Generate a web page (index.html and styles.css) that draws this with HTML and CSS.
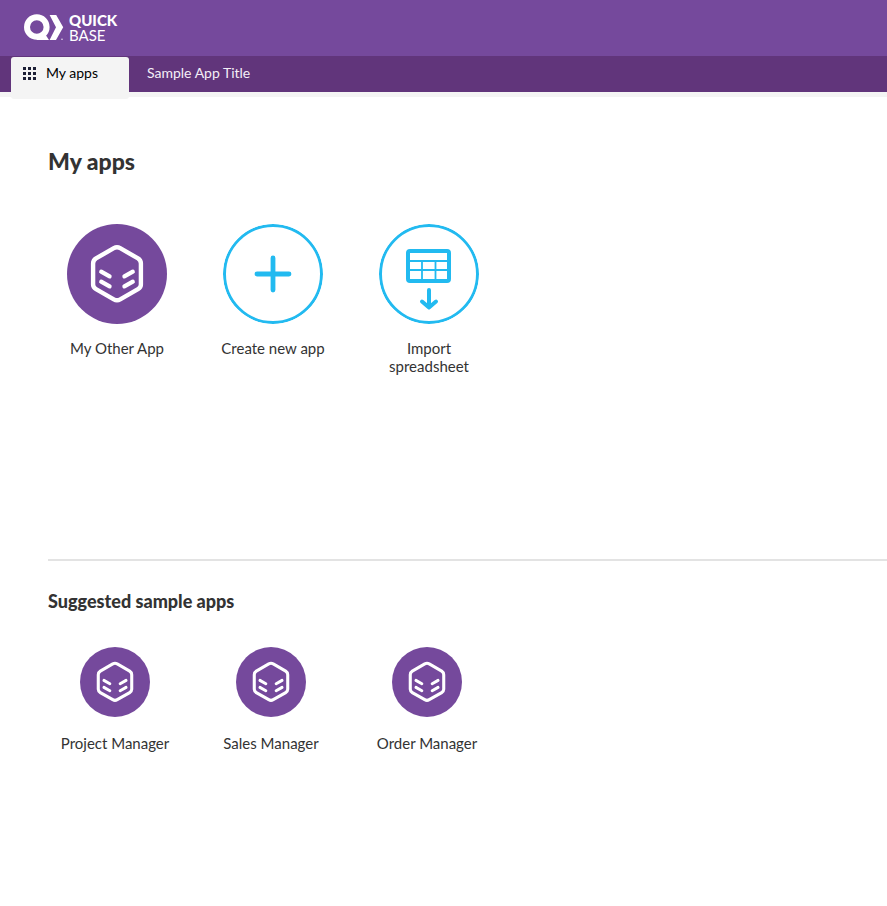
FILE: index.html
```html
<!DOCTYPE html>
<html lang="en">
<head>
<meta charset="utf-8">
<meta name="viewport" content="width=device-width, initial-scale=1">
<title>My apps</title>
<link rel="stylesheet" href="styles.css">
</head>
<body>
<svg class="defs" width="0" height="0" aria-hidden="true">
  <symbol id="hexagon" viewBox="0 0 100 100">
    <g fill="none" stroke="#fff" stroke-width="4.4" stroke-linecap="round" stroke-linejoin="round">
      <path d="M46.8 24.2Q50 22.4 53.2 24.2L71 34.4Q73.9 36.2 73.9 39.5V60.5Q73.9 63.4 71 65.1L53.2 75.3Q50 77.1 46.8 75.3L29 65.1Q26.1 63.4 26.1 60.5V39.5Q26.1 36.2 29 34.4Z"/>
      <path d="M34.2 47.7L42.6 52.4M34.2 57.7L42.6 62.4M65.8 47.7L57.4 52.4M65.8 57.7L57.4 62.4" stroke-width="4.2"/>
    </g>
  </symbol>
</svg>

<header class="header">
  <a class="logo" href="#" aria-label="Quick Base">
    <svg class="logo-mark" viewBox="0 0 40 28" aria-hidden="true">
      <circle cx="12.8" cy="13" r="9.8" fill="none" stroke="#fff" stroke-width="6"/>
      <path d="M12.8 20.5L19 18.8L22.2 21.8L25 26H12.8ZM25.6 1H32.2L39.2 13.2L32 26H25.6L32 13.2Z" fill="#fff"/>
      <circle cx="38" cy="25.3" r=".7" fill="#fff"/>
    </svg>
    <span class="logo-text"><span class="logo-quick">QUICK</span><span class="logo-base">BASE</span></span>
  </a>
</header>

<nav class="tabs">
  <a class="tab tab-active" href="#">
    <svg class="grid-icon" viewBox="0 0 13 13" fill="#1d2036" aria-hidden="true">
      <path d="M0 0h3v3H0zM5 0h3v3H5zM10 0h3v3h-3zM0 5h3v3H0zM5 5h3v3H5zM10 5h3v3h-3zM0 10h3v3H0zM5 10h3v3H5zM10 10h3v3h-3z"/>
    </svg>
    <span>My apps</span>
  </a>
  <a class="tab" href="#">Sample App Title</a>
</nav>

<main class="main">
  <section class="my-apps">
    <h1>My apps</h1>
    <div class="apps">
      <a class="app" href="#">
        <svg class="disc disc-purple" aria-hidden="true"><use href="#hexagon"/></svg>
        <span>My Other App</span>
      </a>
      <a class="app" href="#">
        <svg class="disc disc-outline" viewBox="0 0 100 100" aria-hidden="true">
          <circle cx="50" cy="50" r="48.5" stroke-width="3"/>
          <path d="M50 34V66M34 50H66" stroke-width="4.8"/>
        </svg>
        <span>Create new app</span>
      </a>
      <a class="app" href="#">
        <svg class="disc disc-outline" viewBox="0 0 100 100" aria-hidden="true">
          <circle cx="50" cy="50" r="48.5" stroke-width="3"/>
          <rect x="29" y="27" width="41" height="30" rx="2" stroke-width="4"/>
          <path d="M29 37H70M29 46H70M43 37V57M56.5 37V57" stroke-width="1.8"/>
          <path d="M50 66V83M43 77.5L50 83.5L57 77.5" stroke-width="4"/>
        </svg>
        <span>Import spreadsheet</span>
      </a>
    </div>
  </section>
  <section class="samples">
    <h2>Suggested sample apps</h2>
    <div class="apps">
      <a class="app app-small" href="#">
        <svg class="disc disc-purple" aria-hidden="true"><use href="#hexagon"/></svg>
        <span>Project Manager</span>
      </a>
      <a class="app app-small" href="#">
        <svg class="disc disc-purple" aria-hidden="true"><use href="#hexagon"/></svg>
        <span>Sales Manager</span>
      </a>
      <a class="app app-small" href="#">
        <svg class="disc disc-purple" aria-hidden="true"><use href="#hexagon"/></svg>
        <span>Order Manager</span>
      </a>
    </div>
  </section>
</main>
</body>
</html>
```
FILE: styles.css
```css
* {
  box-sizing: border-box;
}

body {
  margin: 0;
  background: #fff;
  color: #333;
  font-family: Lato, "Liberation Sans", sans-serif;
}

a {
  color: inherit;
  text-decoration: none;
}

h1,
h2 {
  margin: 0;
  font-weight: 900;
}

.defs {
  position: absolute;
}

.header {
  display: flex;
  align-items: center;
  height: 56px;
  padding: 0 24px;
  background: #75499c;
}

.logo {
  display: flex;
  align-items: center;
  gap: 5px;
  color: #fff;
}

.logo-mark {
  width: 40px;
  height: 28px;
}

.logo-text {
  display: flex;
  flex-direction: column;
  font-size: 15px;
  line-height: 15px;
}

.logo-quick {
  font-weight: 900;
}

.tabs {
  display: flex;
  align-items: flex-start;
  height: 41px;
  padding: 1px 11px 0;
  border-bottom: 5px solid #f4f4f4;
  background: #61357b;
}

.tab {
  display: flex;
  gap: 10px;
  padding: 7px 18px;
  color: #f4eff7;
  font-size: 14px;
  line-height: 18px;
}

.tab-active {
  width: 118px;
  height: 42px;
  padding: 7px 12px;
  border-radius: 3px;
  background: #f4f4f4;
  color: #000;
}

.grid-icon {
  width: 13px;
  height: 13px;
  margin-top: 3px;
}

.main {
  padding: 48px 0 48px 48px;
}

.my-apps {
  min-height: 414px;
}

h1 {
  font-size: 23px;
  line-height: 32px;
}

h2 {
  font-size: 18px;
  line-height: 24px;
}

.apps {
  display: flex;
  gap: 40px;
}

.my-apps .apps {
  padding: 47px 0 0 11px;
}

.samples {
  padding-top: 28px;
  border-top: 2px solid #e3e3e3;
}

.samples .apps {
  padding: 34px 0 0 9px;
}

.app {
  display: flex;
  flex-direction: column;
  align-items: center;
  gap: 15px;
  width: 116px;
  font-size: 15px;
  line-height: 18px;
  text-align: center;
}

.app-small {
  gap: 17px;
}

.disc {
  width: 100px;
  height: 100px;
  border-radius: 50%;
}

.app-small .disc {
  width: 70px;
  height: 70px;
}

.disc-purple {
  background: #75499c;
}

.disc-outline {
  fill: none;
  stroke: #22baf0;
  stroke-linecap: round;
  stroke-linejoin: round;
}
```
